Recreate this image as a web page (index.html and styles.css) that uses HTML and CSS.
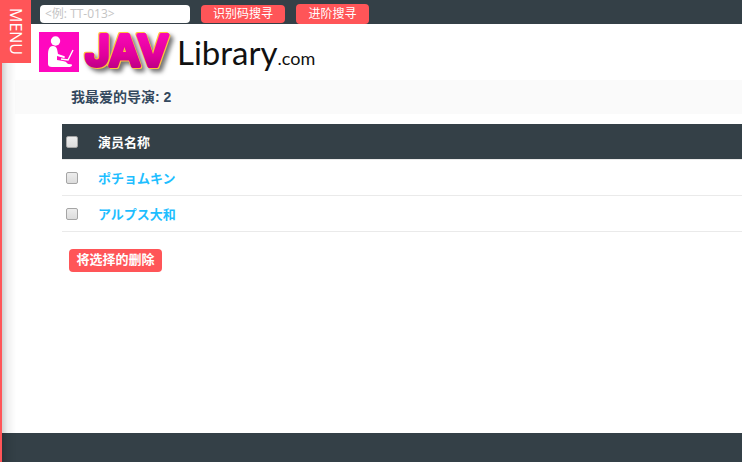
FILE: index.html
```html
<!DOCTYPE html>
<html lang="zh-CN">
<head>
<meta charset="utf-8">
<title>JAVLibrary.com</title>
<link rel="stylesheet" href="styles.css">
</head>
<body>
<div class="edge"></div>
<button class="menu-tab" type="button">MENU</button>
<form class="topbar">
  <input class="search" type="text" placeholder="&lt;例: TT-013&gt;" aria-label="识别码">
  <button class="btn btn-id" type="button">识别码搜寻</button>
  <button class="btn btn-advanced" type="button">进阶搜寻</button>
</form>
<main class="content">
  <a class="logo" href="#">
    <svg class="logo-mark" viewBox="0 0 40 40" aria-hidden="true">
      <rect width="40" height="40" fill="#ff08bf"/>
      <circle cx="16.500" cy="9" r="4.700" fill="#fff"/>
      <path d="M14 14C9 14 9 20 9 25V32Q9 35 13 35H29Q33 35 33 33Q33 32 29 32Q27 29 24 29L18 28V24L25 26Q27 25 25 24L19 22L18 17Q17 14 14 14Z" fill="#fff"/>
      <path d="M22 27L29 28L34 18" fill="none" stroke="#fff" stroke-width="1.400"/>
    </svg>
    <svg class="logo-jav" viewBox="0 0 98 48">
      <defs>
        <linearGradient id="gloss" x1="0" y1="0" x2="0" y2="1">
          <stop offset="0.200" stop-color="#f808b4"/>
          <stop offset="0.600" stop-color="#e0009c"/>
          <stop offset="1" stop-color="#a80076"/>
        </linearGradient>
      </defs>
      <text x="6" y="38">JAV</text>
    </svg>
    <span class="logo-library">Library<span class="logo-com">.com</span></span>
  </a>
  <h1 class="heading">我最爱的导演: 2</h1>
  <form class="list">
    <table class="directors">
      <thead>
        <tr><th class="pick"><input type="checkbox" aria-label="全选"></th><th>演员名称</th></tr>
      </thead>
      <tbody>
        <tr><td class="pick"><input type="checkbox" id="d1"></td><td><label for="d1"><a href="#">ポチョムキン</a></label></td></tr>
        <tr><td class="pick"><input type="checkbox" id="d2"></td><td><label for="d2"><a href="#">アルプス大和</a></label></td></tr>
      </tbody>
    </table>
    <button class="btn btn-delete" type="button">将选择的删除</button>
  </form>
</main>
<footer class="footer"></footer>
</body>
</html>
```
FILE: styles.css
```css
* { box-sizing: border-box; }

body {
  margin: 0;
  min-height: 100vh;
  display: flex;
  flex-direction: column;
  background: #fff;
  font-family: "Open Sans", "Noto Sans CJK SC", sans-serif;
  font-size: 13px;
  color: #34495e;
}

.edge {
  position: fixed;
  z-index: 1;
  top: 0;
  bottom: 0;
  left: 0;
  width: 16px;
  border-left: 2px solid #ff5558;
  background: linear-gradient(to right, rgba(0, 0, 0, 0.18), rgba(0, 0, 0, 0.06) 40%, transparent);
  pointer-events: none;
}

.menu-tab {
  position: fixed;
  z-index: 2;
  top: 0;
  left: 0;
  width: 31px;
  height: 63px;
  padding: 0;
  border: 0;
  background: #ff5558;
  color: #fff;
  font: 16px "Open Sans", sans-serif;
  writing-mode: vertical-rl;
}

.topbar {
  display: flex;
  align-items: flex-end;
  height: 24px;
  padding: 0 40px;
  background: #344047;
}

.search {
  width: 150px;
  height: 18px;
  margin: 0 11px 1px 0;
  padding: 0 5px;
  border: 0;
  border-radius: 4px;
  background: #fff;
  font: 12px/18px "Open Sans", "Noto Sans CJK SC", sans-serif;
}

.search::placeholder { color: #c4c4c4; }

.btn {
  padding: 0;
  border: 0;
  border-radius: 4px;
  background: #ff5558;
  color: #fff;
  font: 12px/18px "Open Sans", "Noto Sans CJK SC", sans-serif;
}

.btn-id {
  width: 84px;
  height: 18px;
  margin: 0 11px 1px 0;
}

.btn-advanced {
  width: 73px;
  height: 20px;
  line-height: 20px;
}

.content {
  flex: 1;
  padding-left: 15px;
}

.logo {
  display: flex;
  align-items: center;
  height: 56px;
  padding-left: 24px;
  color: #111;
  text-decoration: none;
}

.logo-mark {
  width: 40px;
  height: 40px;
}

.logo-jav {
  width: 98px;
  height: 48px;
  overflow: visible;
}

.logo-jav text {
  font: 600 43px Inter, sans-serif;
  fill: url(#gloss);
  stroke: url(#gloss);
  stroke-width: 4px;
  stroke-linejoin: round;
  filter: drop-shadow(1px 1px 0 #ffc13d) drop-shadow(-1px -1px 0 #ffc13d) drop-shadow(3px 3px 2px rgba(0, 0, 0, 0.55));
}

.logo-library {
  padding-top: 6px;
  font: 33px/48px Lato, sans-serif;
}

.logo-com { font-size: 18px; }

.heading {
  margin: 0;
  height: 34px;
  padding-left: 56px;
  background: #fafafa;
  font: bold 14px/34px "Liberation Sans", "Noto Sans CJK SC", sans-serif;
}

.list { padding: 10px 0 0 47px; }

.directors {
  width: 100%;
  border-spacing: 0;
  font: bold 13px/20px "Open Sans", "Noto Sans CJK JP", sans-serif;
  text-align: left;
}

.directors th,
.directors td {
  height: 36px;
  padding: 0;
  border-bottom: 1px solid #eaeaea;
}

.directors th {
  background: #344047;
  color: #fff;
  font-family: "Open Sans", "Noto Sans CJK SC", sans-serif;
}

.directors .pick {
  width: 36px;
  padding-left: 4px;
}

.directors input {
  display: block;
  appearance: none;
  width: 12px;
  height: 12px;
  margin: 0;
  border: 1px solid #a5a5a5;
  border-radius: 2px;
  background: linear-gradient(#ededed, #dcdcdc);
}

.directors a {
  color: #1ebeff;
  text-decoration: none;
}

.btn-delete {
  width: 93px;
  height: 23px;
  margin: 17px 0 0 7px;
  padding-bottom: 3px;
  font-weight: bold;
  font-size: 13px;
  line-height: 20px;
}

.footer {
  height: 29px;
  background: #344047;
}
```
